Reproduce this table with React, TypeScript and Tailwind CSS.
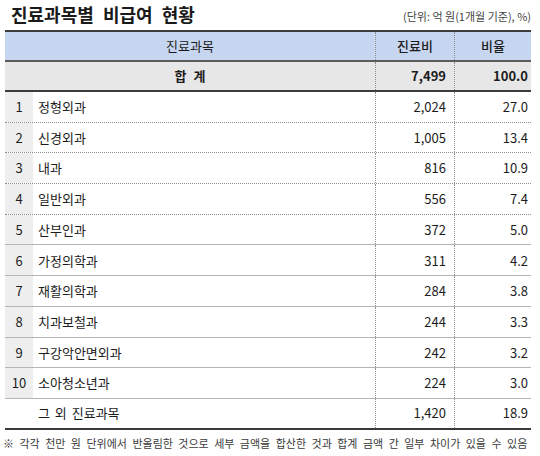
import React from 'react';

type Row = { rank?: number; name: string; cost: string; ratio: string; line: 'dot' | 'solid' | 'end' };

const rows: Row[] = [
  { rank: 1, name: '정형외과', cost: '2,024', ratio: '27.0', line: 'dot' },
  { rank: 2, name: '신경외과', cost: '1,005', ratio: '13.4', line: 'dot' },
  { rank: 3, name: '내과', cost: '816', ratio: '10.9', line: 'dot' },
  { rank: 4, name: '일반외과', cost: '556', ratio: '7.4', line: 'dot' },
  { rank: 5, name: '산부인과', cost: '372', ratio: '5.0', line: 'solid' },
  { rank: 6, name: '가정의학과', cost: '311', ratio: '4.2', line: 'solid' },
  { rank: 7, name: '재활의학과', cost: '284', ratio: '3.8', line: 'solid' },
  { rank: 8, name: '치과보철과', cost: '244', ratio: '3.3', line: 'solid' },
  { rank: 9, name: '구강악안면외과', cost: '242', ratio: '3.2', line: 'solid' },
  { rank: 10, name: '소아청소년과', cost: '224', ratio: '3.0', line: 'solid' },
  { name: '그 외 진료과목', cost: '1,420', ratio: '18.9', line: 'end' },
];

const lineClass = {
  dot: 'border-b border-dotted border-[#8f8f8f]',
  solid: 'border-b border-solid border-[#b5b5b5]',
  end: 'border-b-2 border-solid border-[#3a3a3a]',
};

const App: React.FC = () => (
  <div className="w-[540px] h-[456px] bg-white text-[#1c1c1c] font-['Noto_Sans_CJK_KR','Noto_Sans',sans-serif]">
    {/* title */}
    <div className="flex h-[30px] items-start justify-between pl-[11px] pr-[9px]">
      <div className="mt-[3px] text-[18px] font-bold leading-[22px] text-[#1a1a1a] [word-spacing:5px]">
        진료과목별 비급여 현황
      </div>
      <div className="mt-[9px] text-[11px] leading-[14px] text-[#444]">(단위: 억 원(1개월 기준), %)</div>
    </div>

    {/* table */}
    <div className="ml-[5px] w-[526px] border-t-2 border-[#3c3c3c] text-[13px]">
      <div className="flex h-[30px] items-center border-b-2 border-[#5c5c5c] bg-[#c7d6f0]">
        <div className="flex h-full w-[370px] items-center justify-center">진료과목</div>
        <div className="flex h-full w-[79px] items-center justify-center border-l border-dotted border-[#8f8f8f] font-medium">진료비</div>
        <div className="flex h-full flex-1 items-center justify-center border-l border-dotted border-[#8f8f8f] font-medium">비율</div>
      </div>
      <div className="flex h-[30px] items-center border-b-2 border-[#3c3c3c] bg-[#e7e7e7] font-bold">
        <div className="flex h-full w-[370px] items-center justify-center [word-spacing:4px]">합 계</div>
        <div className="flex h-full w-[79px] items-center justify-end border-l border-dotted border-[#8f8f8f] pr-[8px]">7,499</div>
        <div className="flex h-full flex-1 items-center justify-end border-l border-dotted border-[#8f8f8f] pr-[3px]">100.0</div>
      </div>
      {rows.map((r) => (
        <div key={r.name} className={`flex h-[30.7px] items-center ${lineClass[r.line]}`}>
          <div className={`flex h-full w-[28px] items-center justify-center ${r.rank ? 'bg-[#eeeeee]' : ''}`}>{r.rank}</div>
          <div className="flex h-full w-[342px] items-center pl-[5px] [word-spacing:2px]">{r.name}</div>
          <div className="flex h-full w-[79px] items-center justify-end border-l border-dotted border-[#8f8f8f] pr-[8px]">{r.cost}</div>
          <div className="flex h-full flex-1 items-center justify-end border-l border-dotted border-[#8f8f8f] pr-[3px]">{r.ratio}</div>
        </div>
      ))}
    </div>

    <div className="mt-[5px] whitespace-nowrap pl-[3px] text-[11px] leading-[16px] text-[#3a3a3a] [word-spacing:3px]">
      ※ 각각 천만 원 단위에서 반올림한 것으로 세부 금액을 합산한 것과 합계 금액 간 일부 차이가 있을 수 있음
    </div>
  </div>
);

export default App;
